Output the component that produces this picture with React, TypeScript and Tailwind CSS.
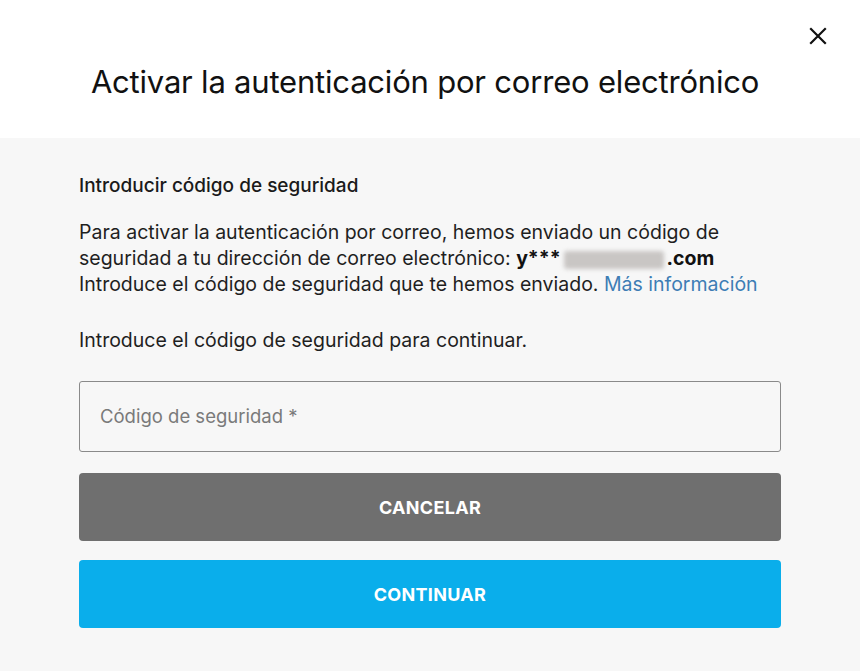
import React from "react";

export default function App() {
  return (
    <div
      className="w-[860px] h-[671px] flex flex-col bg-[#f7f7f7] text-[#1f1f1f] overflow-hidden"
      style={{ fontFamily: "Inter, 'Noto Sans', sans-serif" }}
    >
      <div className="relative bg-white h-[138px] flex items-center justify-center shrink-0">
        <h1 className="text-[31px] font-normal tracking-[-0.2px] text-[#111] mt-[26px] ml-[-10px]">
          Activar la autenticación por correo electrónico
        </h1>
        <button className="absolute right-[32px] top-[26px] w-[20px] h-[20px] flex items-center justify-center">
          <svg width="18" height="18" viewBox="0 0 18 18" fill="none">
            <path d="M2 2L16 16M16 2L2 16" stroke="#111" strokeWidth="2.2" strokeLinecap="square" />
          </svg>
        </button>
      </div>

      <div className="px-[79px] pt-[35px] flex flex-col">
        <h2 className="text-[19px] font-medium leading-[26px] text-[#1a1a1a]">
          Introducir código de seguridad
        </h2>
        <p className="mt-[20px] text-[19.5px] leading-[26px] text-[#1f1f1f]">
          Para activar la autenticación por correo, hemos enviado un código de
          <br />
          seguridad a tu dirección de correo electrónico:{" "}
          <span className="font-bold text-[#111]">y***</span>
          <span className="inline-block align-middle w-[100px] h-[18px] mx-[3px] rounded-[3px] bg-[#c9c6c4] blur-[2px]" />
          <span className="font-bold text-[#111]">.com</span>
          <br />
          Introduce el código de seguridad que te hemos enviado.{" "}
          <a className="text-[#3d7db5]">Más información</a>
        </p>
        <p className="mt-[30px] text-[19.5px] leading-[26px] text-[#1f1f1f]">
          Introduce el código de seguridad para continuar.
        </p>

        <div className="mt-[28px] h-[71px] border border-[#8a8a8a] rounded-[3px] bg-[#f7f7f7] flex items-center px-[20px]">
          <span className="text-[18.5px] text-[#7a7a7a]">Código de seguridad *</span>
        </div>

        <button className="mt-[21px] h-[68px] rounded-[4px] bg-[#6f6f6f] text-white text-[18px] font-bold tracking-[0.3px] flex items-center justify-center">
          CANCELAR
        </button>
        <button className="mt-[19px] h-[68px] rounded-[4px] bg-[#0aaeeb] text-white text-[18px] font-bold tracking-[0.3px] flex items-center justify-center">
          CONTINUAR
        </button>
      </div>
    </div>
  );
}
